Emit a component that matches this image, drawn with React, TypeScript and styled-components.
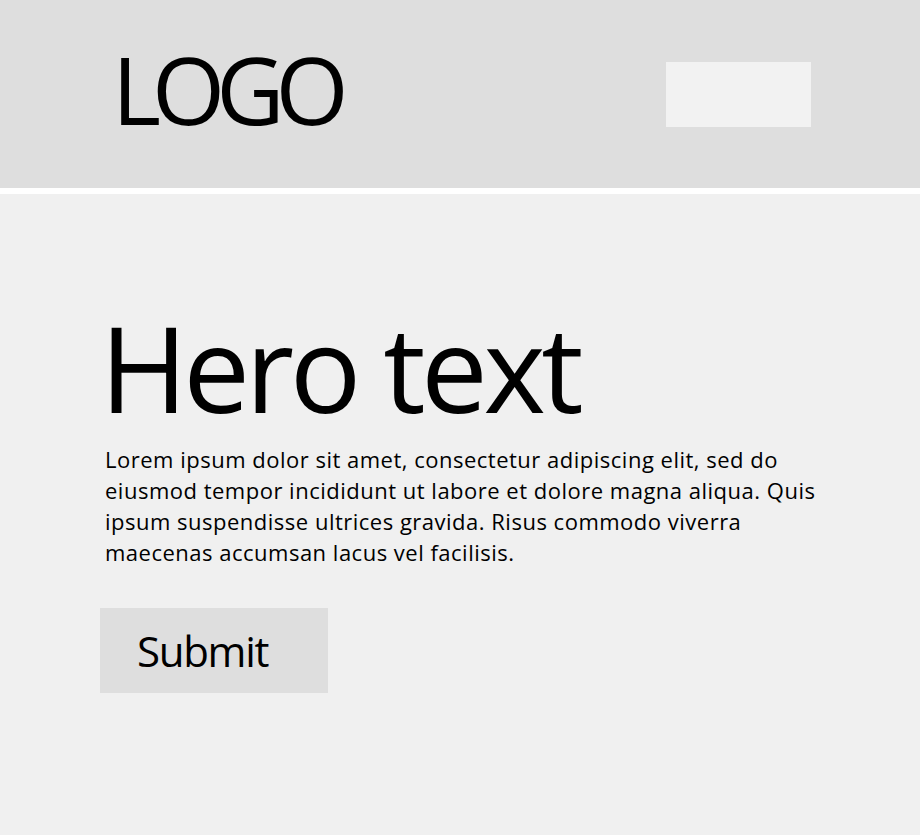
import { createGlobalStyle } from "styled-components";
import styled from "styled-components";

const GlobalStyle = createGlobalStyle`
    html, body {
        margin: 0;
        padding: 0;
        background: #f0f0f0;
        font-family: "Open Sans", "Noto Sans", sans-serif;
        color: #000;
    }
`;

const Header = styled.header`
    box-sizing: border-box;
    height: 194px;
    padding: 42px 109px 0 112px;
    display: flex;
    justify-content: space-between;
    align-items: flex-start;
    background: #dedede;
    border-bottom: 6px solid #ffffff;
`;

const Logo = styled.div`
    font-size: 94px;
    line-height: 1;
    letter-spacing: -9px;
`;

const NavBox = styled.div`
    width: 145px;
    height: 65px;
    margin-top: 20px;
    background: #f2f2f2;
`;

const Hero = styled.main`
    padding: 114px 0 0 100px;
    display: flex;
    flex-direction: column;
    align-items: flex-start;
`;

const Title = styled.h1`
    margin: 0 0 17px 0;
    font-size: 119px;
    font-weight: 400;
    line-height: 1;
    letter-spacing: -4.5px;
`;

const Text = styled.p`
    margin: 0 0 40px 5px;
    width: 728px;
    font-size: 22px;
    line-height: 31px;
    letter-spacing: 0.5px;
`;

const Button = styled.button`
    box-sizing: border-box;
    width: 228px;
    height: 85px;
    padding: 0 0 0 37px;
    display: flex;
    align-items: center;
    border: none;
    background: #dedede;
    font-family: inherit;
    font-size: 42px;
    line-height: 1;
    letter-spacing: -1.3px;
    color: #000;
`;

export default function App() {
    return (
        <>
            <GlobalStyle />
            <Header>
                <Logo>LOGO</Logo>
                <NavBox />
            </Header>
            <Hero>
                <Title>Hero text</Title>
                <Text>
                    Lorem ipsum dolor sit amet, consectetur adipiscing elit, sed do eiusmod tempor
                    incididunt ut labore et dolore magna aliqua. Quis ipsum suspendisse ultrices
                    gravida. Risus commodo viverra maecenas accumsan lacus vel facilisis.
                </Text>
                <Button>Submit</Button>
            </Hero>
        </>
    );
}
